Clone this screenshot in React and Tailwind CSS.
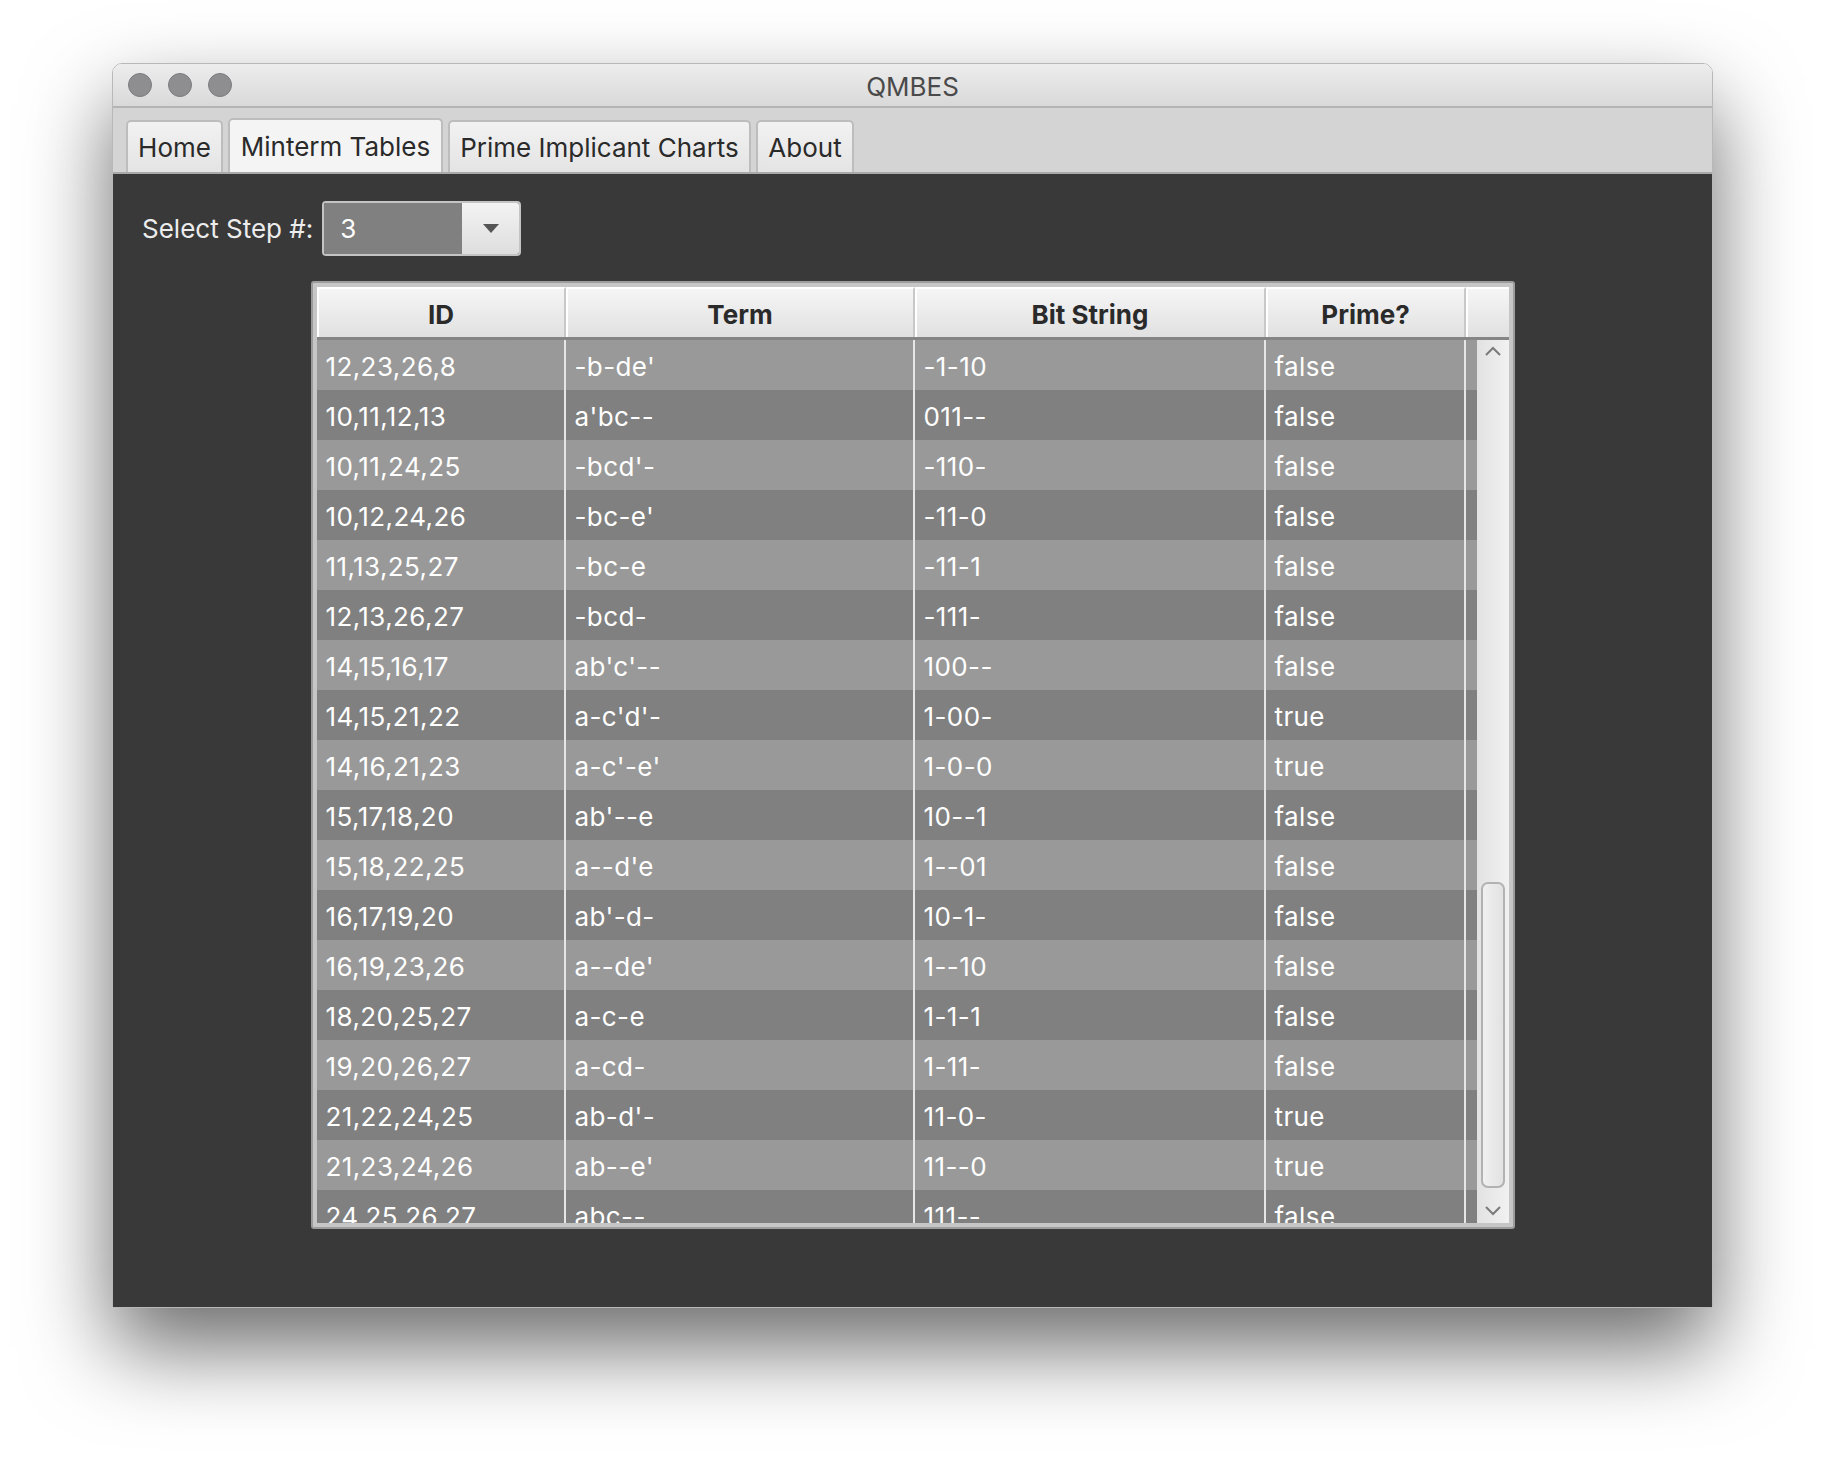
import React from 'react';

const rows = [
  ['12,23,26,8', "-b-de'", '-1-10', 'false'],
  ['10,11,12,13', "a'bc--", '011--', 'false'],
  ['10,11,24,25', "-bcd'-", '-110-', 'false'],
  ['10,12,24,26', "-bc-e'", '-11-0', 'false'],
  ['11,13,25,27', '-bc-e', '-11-1', 'false'],
  ['12,13,26,27', '-bcd-', '-111-', 'false'],
  ['14,15,16,17', "ab'c'--", '100--', 'false'],
  ['14,15,21,22', "a-c'd'-", '1-00-', 'true'],
  ['14,16,21,23', "a-c'-e'", '1-0-0', 'true'],
  ['15,17,18,20', "ab'--e", '10--1', 'false'],
  ['15,18,22,25', "a--d'e", '1--01', 'false'],
  ['16,17,19,20', "ab'-d-", '10-1-', 'false'],
  ['16,19,23,26', "a--de'", '1--10', 'false'],
  ['18,20,25,27', 'a-c-e', '1-1-1', 'false'],
  ['19,20,26,27', 'a-cd-', '1-11-', 'false'],
  ['21,22,24,25', "ab-d'-", '11-0-', 'true'],
  ['21,23,24,26', "ab--e'", '11--0', 'true'],
  ['24,25,26,27', 'abc--', '111--', 'false'],
];

const widths = ['w-[249px]', 'w-[349px]', 'w-[351px]', 'w-[200px]'];
const headers = ['ID', 'Term', 'Bit String', 'Prime?'];

function Tab({ label, active, width }) {
  return (
    <div
      className={`${width} h-[52px] flex items-center justify-center rounded-t-[5px] border-2 border-b-0 border-[#bdbdbd] text-[26px] text-[#2a2a2a] ${
        active ? 'bg-[#f4f4f4] h-[54px]' : 'bg-gradient-to-b from-[#f2f2f2] to-[#e4e4e4]'
      }`}
    >
      {label}
    </div>
  );
}

function TableRow({ cells, dark }) {
  return (
    <div className={`flex h-[50px] ${dark ? 'bg-[#808080]' : 'bg-[#999999]'}`}>
      {cells.map((c, i) => (
        <div
          key={i}
          className={`${widths[i]} shrink-0 h-full flex items-center pt-[2px] pl-[9px] border-r-2 border-[#e6e6e6] text-white text-[26px] tracking-[0.4px] whitespace-nowrap`}
        >
          {c}
        </div>
      ))}
      <div className="flex-1" />
    </div>
  );
}

export default function App() {
  return (
    <div className="min-h-[1468px] bg-white pl-[112px] pt-[63px] font-['Inter','Liberation_Sans',sans-serif]">
      <div className="w-[1601px] h-[1245px] flex flex-col rounded-t-[10px] border border-[#b8b8b8] shadow-[0_40px_85px_rgba(0,0,0,0.58)] overflow-hidden">
        {/* title bar */}
        <div className="relative h-[44px] shrink-0 flex items-center bg-gradient-to-b from-[#ededed] to-[#d9d9d9] border-b-2 border-[#b4b4b4]">
          <div className="flex gap-[16px] pl-[15px]">
            <div className="w-[24px] h-[24px] rounded-full bg-[#8e8e90] border border-[#7c7c7e]" />
            <div className="w-[24px] h-[24px] rounded-full bg-[#8e8e90] border border-[#7c7c7e]" />
            <div className="w-[24px] h-[24px] rounded-full bg-[#8e8e90] border border-[#7c7c7e]" />
          </div>
          <div className="absolute inset-0 flex items-center justify-center pt-[2px] text-[26px] text-[#4a4a4a] pointer-events-none">
            QMBES
          </div>
        </div>

        {/* tab bar */}
        <div className="h-[66px] shrink-0 bg-[#d4d4d4] flex items-end pl-[13px] gap-[5px] border-b-2 border-[#a9a9a9]">
          <Tab label="Home" width="w-[97px]" />
          <Tab label="Minterm Tables" width="w-[215px]" active />
          <Tab label="Prime Implicant Charts" width="w-[303px]" />
          <Tab label="About" width="w-[98px]" />
        </div>

        {/* content */}
        <div className="flex-1 bg-[#393939] flex flex-col pt-[27px]">
          <div className="flex items-center pl-[29px]">
            <span className="text-[26px] text-[#ececec] mr-[9px]">Select Step #:</span>
            <div className="flex h-[55px] w-[199px] rounded-[4px] border-2 border-[#c4c4c4] overflow-hidden">
              <div className="flex-1 bg-[#808080] flex items-center pl-[16px] text-[26px] text-white">3</div>
              <div className="w-[57px] bg-gradient-to-b from-[#f3f3f3] to-[#dedede] flex items-center justify-center">
                <svg width="16" height="9" viewBox="0 0 16 9">
                  <path d="M0 0 L16 0 L8 9 Z" fill="#555555" />
                </svg>
              </div>
            </div>
          </div>

          <div className="mt-[25px] self-center w-[1204px] h-[948px] rounded-[3px] border-2 border-[#9c9c9c] bg-[#c6c6c6] p-[4px] flex flex-col">
            {/* header */}
            <div className="h-[53px] shrink-0 flex border-b-[3px] border-[#858585] bg-gradient-to-b from-[#f6f6f6] to-[#e1e1e1]">
              {headers.map((h, i) => (
                <div
                  key={h}
                  className={`${widths[i]} shrink-0 flex items-center justify-center pt-[2px] border-t-2 border-l-2 border-white border-r-2 border-r-[#c8c8c8] text-[26px] font-bold text-[#2a2a2a]`}
                >
                  {h}
                </div>
              ))}
              <div className="flex-1 border-t-2 border-l-2 border-white" />
            </div>

            {/* body */}
            <div className="flex-1 flex overflow-hidden">
              <div className="flex-1 overflow-hidden">
                {rows.map((r, i) => (
                  <TableRow key={i} cells={r} dark={i % 2 === 1} />
                ))}
              </div>
              <div className="w-[32px] shrink-0 bg-gradient-to-r from-[#e2e2e2] to-[#f1f1f1] flex flex-col items-center">
                <svg className="mt-[5px] shrink-0" width="18" height="12" viewBox="0 0 18 12">
                  <path d="M2 10 L9 3 L16 10" fill="none" stroke="#7a7a7a" strokeWidth="2" />
                </svg>
                <div className="mt-[525px] shrink-0 w-[24px] h-[306px] rounded-[7px] border-2 border-[#b2b2b2] bg-gradient-to-r from-[#f0f0f0] to-[#e2e2e2]" />
                <svg className="mt-[17px] shrink-0" width="18" height="12" viewBox="0 0 18 12">
                  <path d="M2 2 L9 9 L16 2" fill="none" stroke="#7a7a7a" strokeWidth="2" />
                </svg>
              </div>
            </div>
          </div>
        </div>
      </div>
    </div>
  );
}
